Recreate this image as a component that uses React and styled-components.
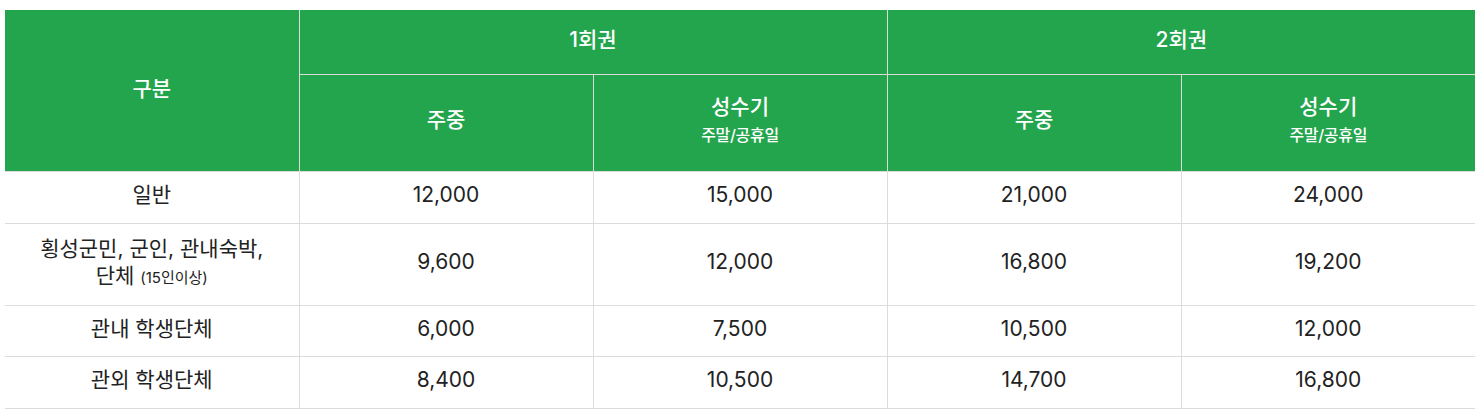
import React from "react";
import styled, { createGlobalStyle } from "styled-components";

const GlobalStyle = createGlobalStyle`
    body {
        margin: 0;
        background: #fff;
        font-family: Inter, "Noto Sans CJK KR", "Noto Sans", sans-serif;
    }
`;

const Wrapper = styled.div`
    padding: 10px 4px 0 5px;
`;

const Table = styled.table`
    width: 1470px;
    border-collapse: collapse;
    table-layout: fixed;
    text-align: center;
`;

const Th = styled.th`
    background-color: #23a54e;
    color: #fff;
    font-size: 21px;
    font-weight: 500;
    border: 1px solid #dcdcdc;
    height: ${(p) => p.$h || 96}px;
    padding: 0 0 ${(p) => p.$pb ?? 6}px;
    line-height: 1.3;
    box-sizing: border-box;

    &:first-child { border-left: none; }
    &:last-child { border-right: none; }
`;

const TopTh = styled(Th)`
    border-top: none;
    vertical-align: top;
    padding-top: 16px;
`;

const SubText = styled.small`
    display: block;
    font-size: 16px;
    font-weight: 500;
    margin-top: 4px;
    letter-spacing: -0.3px;
`;

const Td = styled.td`
    border: 1px solid #dcdcdc;
    border-left: none;
    color: #222;
    font-size: 21px;
    height: ${(p) => (p.$h || 51) - 4}px;
    padding: 0 0 4px;
    line-height: 1.3;

    &:last-child { border-right: none; }
    & + & { border-left: 1px solid #dcdcdc; }
`;

const Note = styled.span`
    font-size: 15px;
`;

const rows = [
    { label: "일반", h: 51, prices: ["12,000", "15,000", "21,000", "24,000"] },
    {
        label: (
            <>
                횡성군민, 군인, 관내숙박,
                <br />
                단체 <Note>(15인이상)</Note>
            </>
        ),
        h: 81,
        prices: ["9,600", "12,000", "16,800", "19,200"],
    },
    { label: "관내 학생단체", h: 50, prices: ["6,000", "7,500", "10,500", "12,000"] },
    { label: "관외 학생단체", h: 51, prices: ["8,400", "10,500", "14,700", "16,800"] },
];

export default function App() {
    return (
        <Wrapper>
            <GlobalStyle />
            <Table>
                <thead>
                    <tr>
                        <Th rowSpan={2} $pb={4} style={{ borderTop: "none" }}>구분</Th>
                        <TopTh colSpan={2} $h={64}>1회권</TopTh>
                        <TopTh colSpan={2} $h={64}>2회권</TopTh>
                    </tr>
                    <tr>
                        <Th $h={97}>주중</Th>
                        <Th $h={97}>
                            성수기
                            <SubText>주말/공휴일</SubText>
                        </Th>
                        <Th $h={97}>주중</Th>
                        <Th $h={97}>
                            성수기
                            <SubText>주말/공휴일</SubText>
                        </Th>
                    </tr>
                </thead>
                <tbody>
                    {rows.map((row, i) => (
                        <tr key={i}>
                            <Td $h={row.h}>{row.label}</Td>
                            {row.prices.map((p, j) => (
                                <Td key={j} $h={row.h}>{p}</Td>
                            ))}
                        </tr>
                    ))}
                </tbody>
            </Table>
        </Wrapper>
    );
}
